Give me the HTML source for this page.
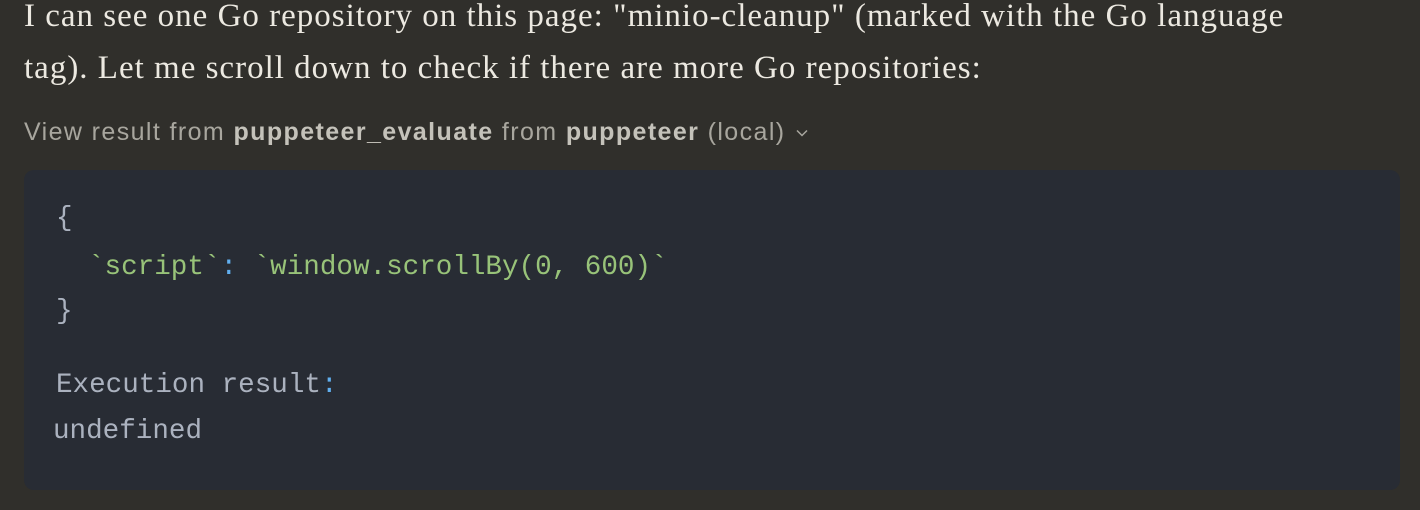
<!DOCTYPE html>
<html><head><style>
body{margin:0;width:1420px;height:510px;background:#302f2b;overflow:hidden;position:relative}
.p{position:absolute;left:24px;font-family:"Liberation Serif",serif;font-size:33px;letter-spacing:1px;color:#ece9e1;white-space:nowrap}
.lab{position:absolute;left:24px;top:118px;font-family:"Liberation Sans",sans-serif;font-size:25px;letter-spacing:1.4px;color:#a8a69e;white-space:nowrap}
.lab b{color:#c4c2ba}
.code{position:absolute;left:24px;top:170px;width:1376px;height:320px;background:#282c34;border-radius:10px}
.m{position:absolute;font-family:"Liberation Mono",monospace;font-size:27.6px;color:#abb2bf;white-space:pre}
.g{color:#98c379}.c{color:#61afef}
</style></head><body>
<div class="p" style="top:-2px">I can see one Go repository on this page: "minio-cleanup" (marked with the Go language</div>
<div class="p" style="top:50px">tag). Let me scroll down to check if there are more Go repositories:</div>
<div class="lab">View result from <b>puppeteer_evaluate</b> from <b>puppeteer</b> (local) <svg width="16" height="16" viewBox="0 0 16 16" style="vertical-align:middle"><path d="M3 5.5l5 5 5-5" fill="none" stroke="#a8a69e" stroke-width="1.5"/></svg></div>
<div class="code">
<div class="m" style="left:32px;top:33px">{</div>
<div class="m" style="left:64px;top:82px"><span class="g">`script`</span><span class="c">:</span> <span class="g">`window.scrollBy(0, 600)`</span></div>
<div class="m" style="left:32px;top:126px">}</div>
<div class="m" style="left:32px;top:200px">Execution result<span class="c">:</span></div>
<div class="m" style="left:29px;top:246px">undefined</div>
</div>
</body></html>
